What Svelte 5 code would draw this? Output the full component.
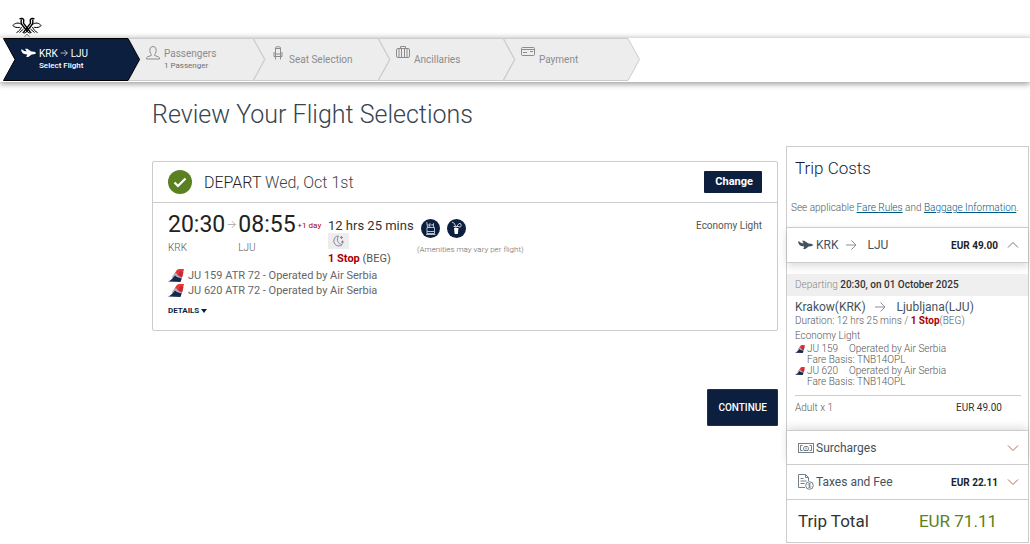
<script>
  let steps = [
    { icon: 'plane', label: 'KRK', to: 'LJU', note: 'Select Flight', active: true },
    { icon: 'person', label: 'Passengers', note: '1 Passenger' },
    { icon: 'seat', label: 'Seat Selection' },
    { icon: 'case', label: 'Ancillaries' },
    { icon: 'card', label: 'Payment' },
  ];

  let flights = [
    { number: 'JU 159', aircraft: 'ATR 72', carrier: 'Operated by Air Serbia', basis: 'TNB14OPL' },
    { number: 'JU 620', aircraft: 'ATR 72', carrier: 'Operated by Air Serbia', basis: 'TNB14OPL' },
  ];
</script>

{#snippet arrow(size)}
  <svg class="arrow" width={size} height={size} viewBox="0 0 12 12" aria-hidden="true">
    <path d="M1 6h10M6.500 1.500 11 6l-4.500 4.500" fill="none" stroke="currentColor" />
  </svg>
{/snippet}

{#snippet chevron(up)}
  <svg class="chevron" class:up width="12" height="8" viewBox="0 0 12 8" aria-hidden="true">
    <path d="M1 1.500 6 6.500l5-5" fill="none" stroke="currentColor" />
  </svg>
{/snippet}

{#snippet plane()}
  <svg width="15" height="10" viewBox="0 0 15 10" aria-hidden="true">
    <path
      d="M0 1.500h1.200l2 1.500 2.500.3L4 .8h2.200l4.200 2.700 2.800.3c1 .2 1.600.7 1.600 1.300 0 .8-.8 1.200-1.800 1.200l-2.300.1L7.300 9H5.200l1.100-2.600-3-.4C1.500 5.400.6 4 0 1.500z"
      fill="currentColor" />
  </svg>
{/snippet}

{#snippet tail(width, height)}
  <svg class="tail" {width} {height} viewBox="0 0 16 13" aria-hidden="true">
    <path d="M8.500 1.500Q9.500 0 11 0h5l-2.500 9.500L5 7z" fill="#ee3434" />
    <path d="m12 2-2 4.500 4.300 1.500 1.200-5z" fill="#c42b35" />
    <path d="M4.500 6.500 8 4l2 2.500 3.800 2.500-.5 1.500L4 9z" fill="#aeb9cd" />
    <path d="M0 12.500C3 11.500 5 9 7 6.500l2 1.500 4.700 1.500-1.200 3.500z" fill="#17284d" />
  </svg>
{/snippet}

<header class="top">
  <svg class="logo" width="30" height="21" viewBox="0 0 30 21" role="img" aria-label="Air Serbia">
    <g fill="none" stroke="#000">
      <path d="M7.500 1.800c1.800-.8 3.800-.4 4.200 1 .3 1.500-.5 2.500 0 3.500l6.800 9M9.500 2.500C8.500 5 9.200 7 11 9l4.500 5.500" stroke-width="1.400" />
      <path d="M22.500 1.800c-1.800-.8-3.800-.4-4.200 1-.3 1.500.5 2.500 0 3.500l-6.800 9M20.500 2.500c1 2.500.3 4.500-1.500 6.500l-4.500 5.500" stroke-width="1.400" />
      <path d="M9.500 7.500C6.500 5 3 6 .8 8.500c1.700 1.800 4.200 2.500 7 1.800M20.500 7.500c3-2.500 6.500-1.500 8.700 1-1.700 1.800-4.200 2.500-7 1.800" />
      <path d="M9.500 10C8.500 12.500 7 14.500 4.500 15.500M20.500 10c1 2.500 2.500 4.500 5 5.500M7.500 15.500l4-3.500M22.500 15.500l-4-3.500" />
      <path d="m10.500 15.500 2 .5 2.500-1.500 2.500 1.500 2-.5" />
      <path d="m12.500 20 2.500-3 2.500 3" stroke="#777" />
    </g>
  </svg>
</header>

<nav class="steps">
  {#each steps as step}
    <a class="step" class:active={step.active} href="#{step.icon}">
      <svg class="shape" viewBox="0 0 137 43" preserveAspectRatio="none" aria-hidden="true">
        <path d="M.5.500H125L136.500 21.500 125 42.500H.5L12 21.500z" />
      </svg>
      <span class="step-icon">
        {#if step.icon === 'plane'}
          {@render plane()}
        {:else if step.icon === 'person'}
          <svg width="14" height="14" viewBox="0 0 14 14" fill="none" stroke="currentColor" aria-hidden="true">
            <path d="M5.300 8.500C3.800 7 3.800 4.500 4 3 4.200 1.200 5.500.6 7 .6s2.800.6 3 2.400c.2 1.500.2 4-1.300 5.500v1l3.800 1.300c.8.400 1 1 1 2.200H.5c0-1.200.2-1.800 1-2.200l3.800-1.300z" />
          </svg>
        {:else if step.icon === 'seat'}
          <svg width="10" height="14" viewBox="0 0 10 14" fill="none" stroke="currentColor" aria-hidden="true">
            <path d="M2.500 8V1.500c0-1 5-1 5 0V8M1 6v4.500h8V6M2.500 8h5v2.500M2.500 8v2.500M2.500 11v2.500M7.500 11v2.500M2.500 2.500h5" />
          </svg>
        {:else if step.icon === 'case'}
          <svg width="14" height="14" viewBox="0 0 14 14" fill="none" stroke="currentColor" aria-hidden="true">
            <rect x=".5" y="2.500" width="13" height="9" rx="1.500" />
            <path d="M4.500 2.500v-2h5v2M3 2.500v9M11 2.500v9M5.500 2.500v9M8.500 2.500v9" />
          </svg>
        {:else}
          <svg width="14" height="14" viewBox="0 0 14 14" fill="none" stroke="currentColor" aria-hidden="true">
            <rect x=".5" y="1.500" width="13" height="8" rx="1" />
            <path d="M1 3.500h12M2 6.500h4M9 5.500h3" />
          </svg>
        {/if}
      </span>
      <span class="step-text" class:single={!step.note}>
        <span class="step-label">
          {step.label}
          {#if step.to}{@render arrow(8)} {step.to}{/if}
        </span>
        {#if step.note}<span class="step-note">{step.note}</span>{/if}
      </span>
    </a>
  {/each}
</nav>

<div class="page">
  <main>
    <h1>Review Your Flight Selections</h1>

    <section class="card">
      <div class="card-head">
        <svg class="check" width="24" height="24" viewBox="0 0 24 24" aria-hidden="true">
          <circle cx="12" cy="12" r="12" fill="#5b8021" />
          <path d="m6.500 12.500 3.500 3.500L17.500 8.500" fill="none" stroke="#fff" stroke-width="2.200" />
        </svg>
        <h2>DEPART <span>Wed, Oct 1st</span></h2>
        <button class="change" type="button">Change</button>
      </div>

      <div class="card-body">
        <div class="summary">
          <div class="times">
            <div>
              <div class="time">20:30</div>
              <div class="code">KRK</div>
            </div>
            {@render arrow(9)}
            <div>
              <div class="time">08:55</div>
              <div class="code">LJU</div>
            </div>
            <span class="plus">+1 day</span>
          </div>

          <div class="duration">
            <div class="length">12 hrs 25 mins</div>
            <div class="night">
              <svg width="12" height="12" viewBox="0 0 12 12" fill="none" stroke="#8583a0" aria-hidden="true">
                <path d="M5.500 1C2.500 1 .8 3.500.8 6s2 5 5 5c1.500 0 2.700-.7 3.400-1.500C5 9.500 3 4.500 5.500 1zM8.500 1v3M7 2.500h3M9.500 5.500v3M8 7h3" />
              </svg>
            </div>
            <div class="stops"><b>1 Stop</b> (BEG)</div>
          </div>

          <div class="amenities">
            <div class="badges">
              <svg width="19" height="19" viewBox="0 0 19 19" aria-label="Snack" role="img">
                <circle cx="9.500" cy="9.500" r="9.500" fill="#0d1f3f" />
                <g fill="none" stroke="#c9d0de" stroke-width=".9">
                  <path d="M6 8.500h7.500v6H6zM6 12.500h7.500M5 15.500h9.500" />
                  <path d="m6.500 8-.8-5M8 8l1-3.500 2 2 1.500-2V8M6.500 5.500l3 1.500" />
                </g>
              </svg>
              <svg width="19" height="19" viewBox="0 0 19 19" aria-label="Drinks" role="img">
                <circle cx="9.500" cy="9.500" r="9.500" fill="#0d1f3f" />
                <path d="M7 9h4.500l-.7 6H7.700z" fill="#fff" />
                <path d="M5 3l2.500 1.500L9 9M6.500 7.500h5.500M12 4.500a1.800 1.800 0 1 1 0 3.500M10 7l2-2.500" fill="none" stroke="#c9d0de" />
              </svg>
            </div>
            <div class="vary">(Amenities may vary per flight)</div>
          </div>

          <div class="cabin">Economy Light</div>
        </div>

        <ul class="flights">
          {#each flights as flight}
            <li>
              {@render tail(16, 13)}
              {flight.number} {flight.aircraft} - {flight.carrier}
            </li>
          {/each}
        </ul>

        <button class="details" type="button">
          DETAILS
          <svg width="6" height="4" viewBox="0 0 6 4" aria-hidden="true"><path d="M0 0h6L3 4z" fill="currentColor" /></svg>
        </button>
      </div>
    </section>

    <button class="continue" type="button">CONTINUE</button>
  </main>

  <aside class="costs">
    <h2>Trip Costs</h2>
    <p class="rules">
      See applicable <a href="#fare-rules">Fare Rules</a> and <a href="#baggage">Baggage Information</a>.
    </p>

    <button class="row open" type="button">
      <span class="row-icon">{@render plane()}</span>
      <span class="row-name route">KRK {@render arrow(12)} LJU</span>
      <b>EUR 49.00</b>
      {@render chevron(true)}
    </button>

    <div class="leg">
      <div class="departing">Departing <b>20:30, on 01 October 2025</b></div>
      <div class="leg-body">
        <div class="cities">Krakow(KRK) {@render arrow(12)} Ljubljana(LJU)</div>
        <div class="line">Duration: 12 hrs 25 mins / <b>1 Stop</b>(BEG)</div>
        <div class="line cabin-name">Economy Light</div>
        {#each flights as flight}
          <div class="line leg-flight">
            {@render tail(10, 8)}
            <span class="leg-number">{flight.number}</span>
            <span>{flight.carrier}</span>
          </div>
          <div class="line basis">Fare Basis: {flight.basis}</div>
        {/each}
        <div class="fare">
          <span>Adult x 1</span>
          <b>EUR 49.00</b>
        </div>
      </div>
    </div>

    <button class="row raised" type="button">
      <span class="row-icon">
        <svg width="16" height="10" viewBox="0 0 16 10" fill="none" stroke="#73808a" aria-hidden="true">
          <rect x=".5" y=".5" width="15" height="9" />
          <path d="M4.500 2.500h-2v5h2M11.500 2.500h2v5h-2M6 7.500 5.500 5l1-1.500h3l1 1.500-.5 2.500zM8 4.500v2" />
        </svg>
      </span>
      <span class="row-name">Surcharges</span>
      {@render chevron(false)}
    </button>

    <button class="row" type="button">
      <span class="row-icon">
        <svg width="16" height="16" viewBox="0 0 16 16" fill="none" stroke="#73808a" aria-hidden="true">
          <path d="M7 13.500H.5V.5h7l3 3V7M7.500.5v3h3M2.500 4.500h3M2.500 7h6M2.500 9.500h4" />
          <circle cx="11.500" cy="11.500" r="3.800" />
          <path d="M13 10c-1-.8-3-.5-3 .5s3 1 3 2-2 1.300-3 .5M11.500 9v5" stroke-width=".8" />
        </svg>
      </span>
      <span class="row-name">Taxes and Fee</span>
      <b>EUR 22.11</b>
      {@render chevron(false)}
    </button>

    <div class="total">
      <span>Trip Total</span>
      <span class="amount">EUR 71.11</span>
    </div>
  </aside>
</div>

<style>
  :global(body) {
    background: #fff;
    color: #555;
    font-family: Roboto, 'Liberation Sans', sans-serif;
    font-size: 12px;
  }

  h1,
  h2,
  p,
  ul {
    margin: 0;
    padding: 0;
  }

  button {
    font-family: inherit;
    cursor: pointer;
  }

  svg {
    flex: none;
  }

  .top {
    height: 38px;
    padding-left: 12px;
    box-sizing: border-box;
    background: linear-gradient(#fff 32px, #efefef);
  }

  .logo {
    display: block;
    padding-top: 17px;
  }

  .steps {
    display: flex;
    height: 43px;
    padding: 0 0 1px 3px;
    box-shadow: 0 2px 6px rgba(0, 0, 0, 0.4);
    background: #fff;
  }

  .step {
    position: relative;
    display: flex;
    width: 137px;
    margin-right: -12px;
    padding-left: 18px;
    box-sizing: border-box;
    color: #8c8c8c;
    text-decoration: none;
  }

  .shape {
    position: absolute;
    inset: 0;
    width: 100%;
    height: 100%;
    fill: #ededed;
    stroke: #ccc;
  }

  .active .shape {
    fill: #0d1f3f;
    stroke: #000;
  }

  .step.active {
    z-index: 1;
    color: #fff;
  }

  .step-icon {
    position: relative;
    width: 14px;
    padding-top: 8px;
    text-align: center;
  }

  .active .step-icon {
    padding-top: 10px;
  }

  .step-icon svg {
    display: block;
    margin: 0 auto;
  }

  .step-text {
    position: relative;
    padding: 9px 0 0 4px;
  }

  .step-text.single {
    padding-top: 15px;
  }

  .step-label {
    display: block;
    font-size: 10px;
    line-height: 14px;
  }

  .step-note {
    display: block;
    color: #707070;
    font-size: 8px;
    line-height: 10px;
  }

  .active .step-note {
    color: #fff;
    font-weight: 500;
  }

  .page {
    display: grid;
    grid-template-columns: 1fr 243px;
    gap: 8px;
    align-items: start;
    padding: 0 1px 0 152px;
  }

  h1 {
    margin: 16px 0 30px;
    color: #36454f;
    font-size: 25px;
    font-weight: 300;
    line-height: 33px;
  }

  .card {
    border: 1px solid #ccc;
    border-radius: 2px;
  }

  .card-head {
    display: flex;
    align-items: center;
    gap: 12px;
    height: 40px;
    padding: 0 15px;
    border-bottom: 1px solid #ccc;
  }

  .card-head h2 {
    flex: 1;
    color: #222;
    font-size: 16px;
    font-weight: 300;
  }

  .card-head h2 span {
    color: #444;
  }

  .change {
    padding: 0 9px 0 11px;
    border: 0;
    border-radius: 1px;
    background: #0d1f3f;
    color: #fff;
    font-size: 11px;
    font-weight: 700;
    line-height: 22px;
  }

  .card-body {
    padding: 7px 15px 14px;
  }

  .summary {
    display: flex;
  }

  .times {
    display: flex;
    width: 160px;
    gap: 2px;
  }

  .time {
    color: #222;
    font-size: 23px;
    line-height: 30px;
  }

  .code {
    font-size: 10px;
    font-weight: 300;
    line-height: 16px;
  }

  .times :global(.arrow) {
    margin-top: 10px;
    color: #999;
  }

  .plus {
    color: #a00;
    font-size: 8px;
    line-height: 31px;
    white-space: nowrap;
  }

  .duration {
    width: 89px;
    white-space: nowrap;
  }

  .length {
    padding-top: 8px;
    color: #333;
    font-size: 13px;
    line-height: 15px;
  }

  .night {
    display: flex;
    align-items: center;
    justify-content: center;
    width: 21px;
    height: 16px;
    background: #ededed;
  }

  .stops {
    padding-top: 2px;
    font-size: 11px;
    line-height: 15px;
  }

  b {
    font-weight: 700;
  }

  .stops b,
  .line b {
    color: #a00;
  }

  .badges {
    display: flex;
    gap: 7px;
    padding: 9px 4px 0;
  }

  .vary {
    padding-top: 6px;
    color: #666;
    font-size: 8px;
    font-weight: 300;
    line-height: 11px;
  }

  .cabin {
    flex: 1;
    padding-top: 8px;
    font-size: 10px;
    line-height: 16px;
    text-align: right;
  }

  .flights {
    margin-top: 2px;
    list-style: none;
    color: #666;
    font-size: 11px;
    line-height: 15px;
  }

  .flights li {
    display: flex;
    align-items: center;
    gap: 4px;
  }

  .details {
    display: block;
    margin-top: 7px;
    padding: 0;
    border: 0;
    background: none;
    color: #0d1f3f;
    font-size: 8px;
    font-weight: 700;
    line-height: 11px;
  }

  .continue {
    display: block;
    margin: 58px 0 0 auto;
    padding: 0 10px;
    border: 1px solid #0a3a52;
    border-radius: 1px;
    background: #0d1f3f;
    color: #fff;
    font-size: 10px;
    font-weight: 500;
    line-height: 35px;
  }

  .costs {
    margin-top: 64px;
    border: 1px solid #ccc;
    background: #fff;
  }

  .costs h2 {
    padding: 9px 8px 0;
    color: #0d1f3f;
    font-size: 17px;
    font-weight: 300;
    line-height: 24px;
  }

  .rules {
    padding: 20px 4px 11px;
    font-size: 10px;
    font-weight: 300;
    line-height: 16px;
    white-space: nowrap;
  }

  .rules a {
    color: #005a87;
  }

  .row {
    display: flex;
    align-items: center;
    width: 100%;
    height: 35px;
    padding: 0 9px 0 11px;
    border: 0;
    border-top: 1px solid #ccc;
    background: #fff;
    color: #44525e;
    font-size: 12px;
    text-align: left;
  }

  .row b {
    margin-right: 9px;
    color: #222;
    font-size: 10px;
  }

  .row-icon {
    display: flex;
    width: 18px;
  }

  .row-name {
    flex: 1;
  }

  .route :global(.arrow) {
    margin: 0 7px 0 4px;
    vertical-align: -2px;
  }

  .row.open {
    position: relative;
    height: 36px;
    border-bottom: 1px solid #ccc;
    box-shadow: 0 3px 8px rgba(0, 0, 0, 0.15);
  }

  .row.raised {
    height: 34px;
    box-shadow: 0 -3px 8px rgba(0, 0, 0, 0.12);
  }

  .chevron {
    color: #b4694e;
  }

  .chevron.up {
    color: #777;
    transform: rotate(180deg);
  }

  .leg {
    padding: 11px 0 14px;
  }

  .departing {
    padding: 0 8px;
    background: #efefef;
    color: #888;
    font-size: 10px;
    font-weight: 300;
    line-height: 22px;
  }

  .departing b {
    color: #333;
    font-weight: 500;
  }

  .leg-body {
    padding: 3px 7px 0 8px;
  }

  .cities {
    color: #44525e;
    font-size: 12px;
    line-height: 16px;
  }

  .cities :global(.arrow) {
    margin: 0 8px 0 5px;
    vertical-align: -2px;
  }

  .arrow {
    color: #8b9197;
  }

  .active .arrow {
    color: #fff;
  }

  .line {
    font-size: 10px;
    font-weight: 300;
    line-height: 11px;
  }

  .cabin-name {
    padding: 4px 0 2px;
  }

  .leg-flight {
    display: flex;
    align-items: center;
    gap: 2px;
  }

  .leg-number {
    width: 40px;
  }

  .basis {
    padding-left: 12px;
  }

  .fare {
    display: flex;
    justify-content: space-between;
    margin-top: 8px;
    padding: 4px 19px 0 0;
    border-top: 1px solid #ccc;
    font-size: 10px;
    font-weight: 300;
    line-height: 16px;
  }

  .fare b {
    color: #333;
    font-weight: 400;
  }

  .total {
    display: flex;
    justify-content: space-between;
    padding: 0 31px 0 11px;
    border-top: 1px solid #ccc;
    color: #333;
    font-size: 17px;
    line-height: 42px;
  }

  .amount {
    color: #5b8021;
  }
</style>
